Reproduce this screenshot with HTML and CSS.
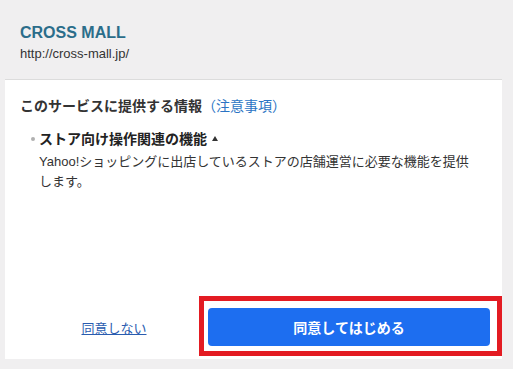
FILE: index.html
```html
<!DOCTYPE html>
<html lang="ja">
<head>
<meta charset="utf-8">
<title>CROSS MALL</title>
<link rel="stylesheet" href="styles.css">
</head>
<body>
<div class="page">
  <header class="head">
    <div class="app-name">CROSS MALL</div>
    <div class="app-url">http://cross-mall.jp/</div>
  </header>
  <main class="panel">
    <section class="info">
      <h2 class="info-title">このサービスに提供する情報<a class="notice" href="#">（注意事項）</a></h2>
      <div class="item">
        <div class="item-title"><span class="dot"></span>ストア向け操作関連の機能<span class="tri"></span></div>
        <p class="item-desc">Yahoo!ショッピングに出店しているストアの店舗運営に必要な機能を提供します。</p>
      </div>
    </section>
    <footer class="actions">
      <div class="decline-wrap"><a class="decline" href="#">同意しない</a></div>
      <button class="agree" type="button">同意してはじめる</button>
      <div class="highlight"></div>
    </footer>
  </main>
</div>
</body>
</html>
```
FILE: styles.css
```css
* { box-sizing: border-box; }
html, body { margin: 0; padding: 0; }
body {
  width: 513px;
  height: 369px;
  background: #f0eff0;
  font-family: "Liberation Sans", "Noto Sans CJK JP", sans-serif;
  color: #333;
  overflow: hidden;
}
.page { display: flex; flex-direction: column; height: 369px; }
.head { height: 79px; padding: 23px 0 0 20px; }
.app-name {
  font-size: 16px;
  font-weight: bold;
  line-height: 20px;
  color: #2b6d8a;
}
.app-url {
  margin-top: 2px;
  font-size: 13px;
  line-height: 18px;
  color: #333;
}
.panel {
  position: relative;
  margin-left: 5px;
  width: 497px;
  height: 280px;
  background: #fff;
  border-top: 1px solid #dcdcdc;
  display: flex;
  flex-direction: column;
  justify-content: space-between;
  padding: 15px 12px 13px 15px;
}
.info-title {
  margin: 0;
  font-size: 14px;
  font-weight: bold;
  line-height: 20px;
  color: #333;
  font-family: "Noto Sans CJK JP", sans-serif;
}
.notice {
  font-weight: normal;
  color: #2a74c4;
  text-decoration: none;
}
.item { margin-top: 13px; padding-left: 19px; }
.item-title {
  position: relative;
  font-size: 14px;
  font-weight: bold;
  line-height: 20px;
  color: #222;
  font-family: "Noto Sans CJK JP", sans-serif;
}
.dot {
  position: absolute;
  left: -8px;
  top: 9px;
  width: 4px;
  height: 4px;
  border-radius: 50%;
  background: #b0b0b0;
}
.tri {
  display: inline-block;
  margin-left: 5px;
  vertical-align: 3px;
  width: 0;
  height: 0;
  border-left: 3px solid transparent;
  border-right: 3px solid transparent;
  border-bottom: 5px solid #333;
}
.item-desc {
  margin: 4px 0 0;
  max-width: 432px;
  font-size: 13px;
  line-height: 20px;
  color: #333;
}
.actions {
  position: relative;
  display: flex;
  align-items: center;
  height: 38px;
}
.decline-wrap {
  width: 188px;
  flex: none;
  text-align: center;
}
.decline {
  font-size: 13px;
  color: #2a5caf;
  text-decoration: underline;
}
.agree {
  flex: 1;
  height: 38px;
  border: 0;
  border-radius: 4px;
  background: #1d6ef0;
  color: #fff;
  font-family: "Noto Sans CJK JP", sans-serif;
  font-size: 14px;
  font-weight: bold;
  padding: 0;
}
.highlight {
  position: absolute;
  left: 179px;
  top: -12px;
  width: 303px;
  height: 60px;
  border: 5px solid #e31b22;
  pointer-events: none;
}
```
